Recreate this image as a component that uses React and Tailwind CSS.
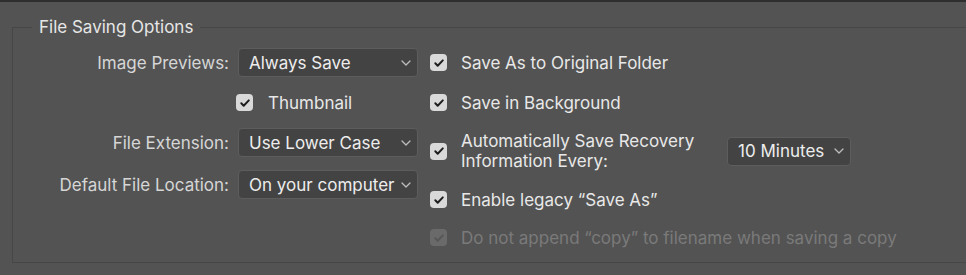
import React from 'react';

const Check = ({ disabled }) => (
	<span
		className={`flex h-[17px] w-[17px] shrink-0 items-center justify-center rounded-[4px] ${
			disabled ? 'bg-[#6a6a6a]' : 'bg-[#d9d9d9]'
		}`}
	>
		<svg width="12" height="12" viewBox="0 0 12 12" fill="none">
			<path
				d="M2.3 6.3l2.4 2.4L9.8 3.4"
				stroke={disabled ? '#575757' : '#1e1e1e'}
				strokeWidth="2"
				strokeLinecap="round"
				strokeLinejoin="round"
			/>
		</svg>
	</span>
);

const Select = ({ value, width }) => (
	<div
		className={`flex h-[29px] ${width} items-center justify-between rounded-[4px] border border-[#5d5d5d] bg-[#434343] pl-[10px] pr-[6px] text-[#ededed]`}
	>
		<span className="whitespace-nowrap">{value}</span>
		<svg width="10" height="6" viewBox="0 0 10 6" fill="none">
			<path d="M1 1l4 4 4-4" stroke="#bdbdbd" strokeWidth="1.3" strokeLinecap="round" strokeLinejoin="round" />
		</svg>
	</div>
);

const CheckRow = ({ label, disabled, className = '' }) => (
	<div className={`flex h-[25px] items-center gap-[14px] ${className}`}>
		<Check disabled={disabled} />
		<span className={`whitespace-nowrap ${disabled ? 'text-[#7a7a7a]' : 'text-[#e8e8e8]'}`}>{label}</span>
	</div>
);

const App = () => {
	return (
		<div className="h-[275px] w-[966px] overflow-hidden border-t-2 border-[#2e2e2e] bg-[#535353] font-['Inter','Liberation_Sans',sans-serif] text-[17px] leading-5">
			<fieldset className="ml-[12px] mr-[-20px] mt-[15px] border border-r-0 border-[#464646]">
				<legend className="ml-[19px] px-[7px] text-[#e6e6e6]">File Saving Options</legend>
				<div className="flex pb-[12px] pt-[11px]">
					<div className="flex flex-col gap-[13px]">
						<div className="flex h-[29px] items-center">
							<span className="w-[225px] pr-[9px] text-right text-[#d6d6d6]">Image Previews:</span>
							<Select value="Always Save" width="w-[180px]" />
						</div>
						<div className="flex h-[25px] items-center">
							<span className="w-[223px]" />
							<CheckRow label="Thumbnail" className="gap-[15px]" />
						</div>
						<div className="flex h-[29px] items-center">
							<span className="w-[225px] pr-[9px] text-right text-[#d6d6d6]">File Extension:</span>
							<Select value="Use Lower Case" width="w-[180px]" />
						</div>
						<div className="flex h-[29px] items-center">
							<span className="w-[225px] whitespace-nowrap pr-[9px] text-right text-[#d6d6d6]">Default File Location:</span>
							<Select value="On your computer" width="w-[180px]" />
						</div>
					</div>
					<div className="ml-[12px] flex flex-col">
						<div className="flex h-[29px] items-center">
							<CheckRow label="Save As to Original Folder" />
						</div>
						<CheckRow label="Save in Background" className="mt-[13px]" />
						<div className="mt-[13px] flex h-[46px] items-center gap-[14px]">
							<Check />
							<span className="w-[252px] text-[#e8e8e8]">
								Automatically Save Recovery
								<br />
								Information Every:
							</span>
							<Select value="10 Minutes" width="w-[124px]" />
						</div>
						<CheckRow label="Enable legacy “Save As”" className="mt-[13px]" />
						<CheckRow label="Do not append “copy” to filename when saving a copy" disabled className="mt-[13px]" />
					</div>
				</div>
			</fieldset>
		</div>
	);
};

export default App;
